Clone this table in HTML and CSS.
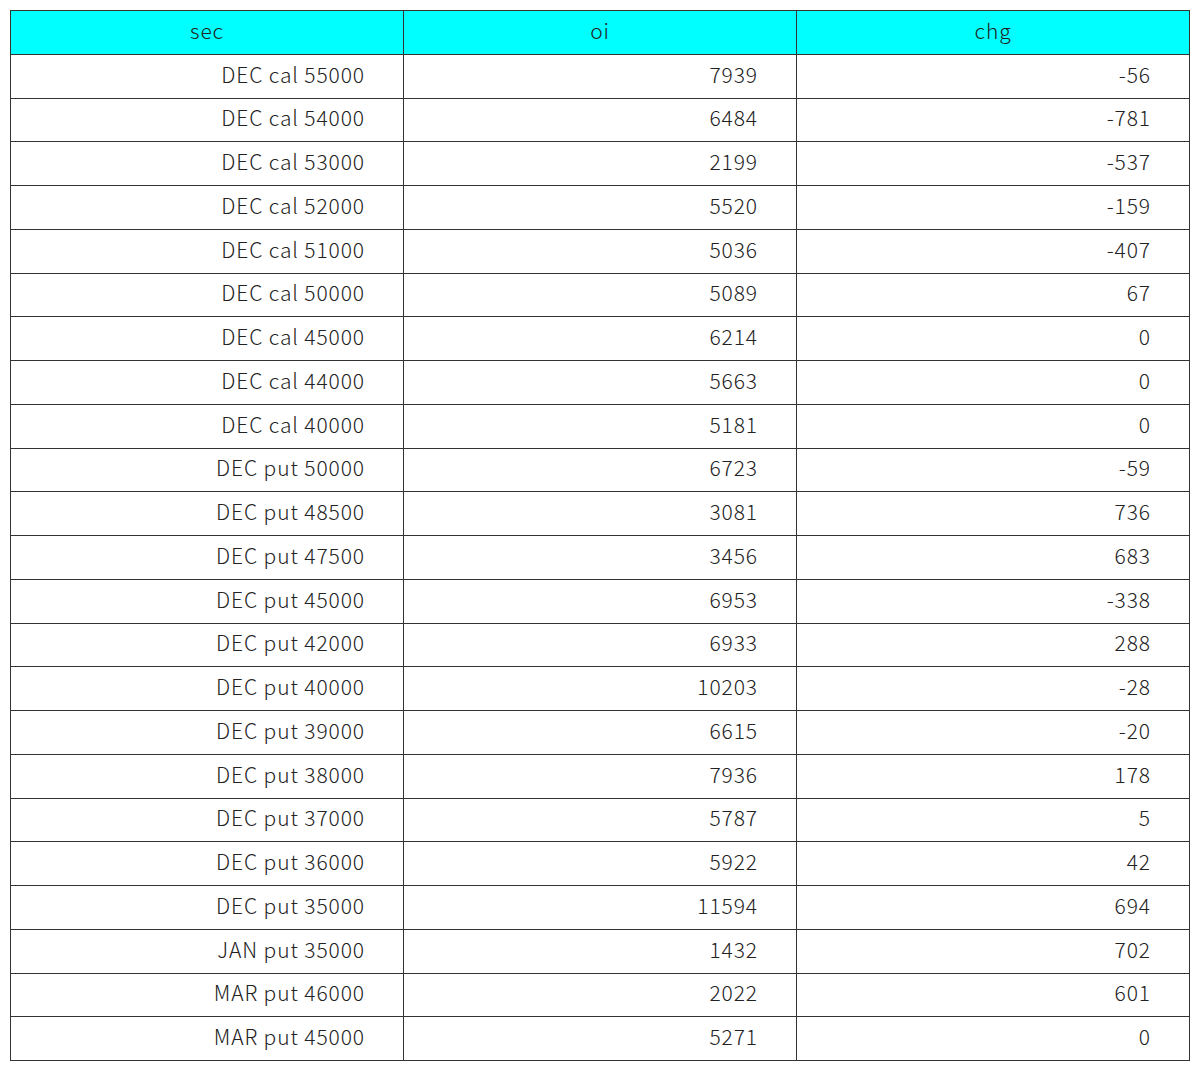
FILE: index.html
```html
<!DOCTYPE html>
<html>
<head>
<meta charset="utf-8">
<link rel="stylesheet" href="styles.css">
</head>
<body>
<table class="data">
<thead>
<tr><th>sec</th><th>oi</th><th>chg</th></tr>
</thead>
<tbody>
<tr><td>DEC cal 55000</td><td>7939</td><td>-56</td></tr>
<tr><td>DEC cal 54000</td><td>6484</td><td>-781</td></tr>
<tr><td>DEC cal 53000</td><td>2199</td><td>-537</td></tr>
<tr><td>DEC cal 52000</td><td>5520</td><td>-159</td></tr>
<tr><td>DEC cal 51000</td><td>5036</td><td>-407</td></tr>
<tr><td>DEC cal 50000</td><td>5089</td><td>67</td></tr>
<tr><td>DEC cal 45000</td><td>6214</td><td>0</td></tr>
<tr><td>DEC cal 44000</td><td>5663</td><td>0</td></tr>
<tr><td>DEC cal 40000</td><td>5181</td><td>0</td></tr>
<tr><td>DEC put 50000</td><td>6723</td><td>-59</td></tr>
<tr><td>DEC put 48500</td><td>3081</td><td>736</td></tr>
<tr><td>DEC put 47500</td><td>3456</td><td>683</td></tr>
<tr><td>DEC put 45000</td><td>6953</td><td>-338</td></tr>
<tr><td>DEC put 42000</td><td>6933</td><td>288</td></tr>
<tr><td>DEC put 40000</td><td>10203</td><td>-28</td></tr>
<tr><td>DEC put 39000</td><td>6615</td><td>-20</td></tr>
<tr><td>DEC put 38000</td><td>7936</td><td>178</td></tr>
<tr><td>DEC put 37000</td><td>5787</td><td>5</td></tr>
<tr><td>DEC put 36000</td><td>5922</td><td>42</td></tr>
<tr><td>DEC put 35000</td><td>11594</td><td>694</td></tr>
<tr><td>JAN put 35000</td><td>1432</td><td>702</td></tr>
<tr><td>MAR put 46000</td><td>2022</td><td>601</td></tr>
<tr><td>MAR put 45000</td><td>5271</td><td>0</td></tr>
</tbody>
</table>
</body>
</html>
```

FILE: styles.css
```css
html, body {
  margin: 0;
  padding: 0;
  background: #ffffff;
}
body {
  padding: 10px;
  font-family: "Noto Sans CJK JP", "Noto Sans", sans-serif;
  color: #222222;
}
.data {
  width: 1180px;
  border-collapse: collapse;
  table-layout: fixed;
  font-size: 21px;
  font-weight: 300;
  letter-spacing: 0.9px;
}
.data th,
.data td {
  border: 1px solid #333333;
  height: 43.75px;
  padding: 0 38px 4px 0;
  box-sizing: border-box;
  text-align: right;
  font-weight: 300;
  line-height: 1;
}
.data th {
  background: #00ffff;
  text-align: center;
  padding: 0 0 4px 0;
}
```
